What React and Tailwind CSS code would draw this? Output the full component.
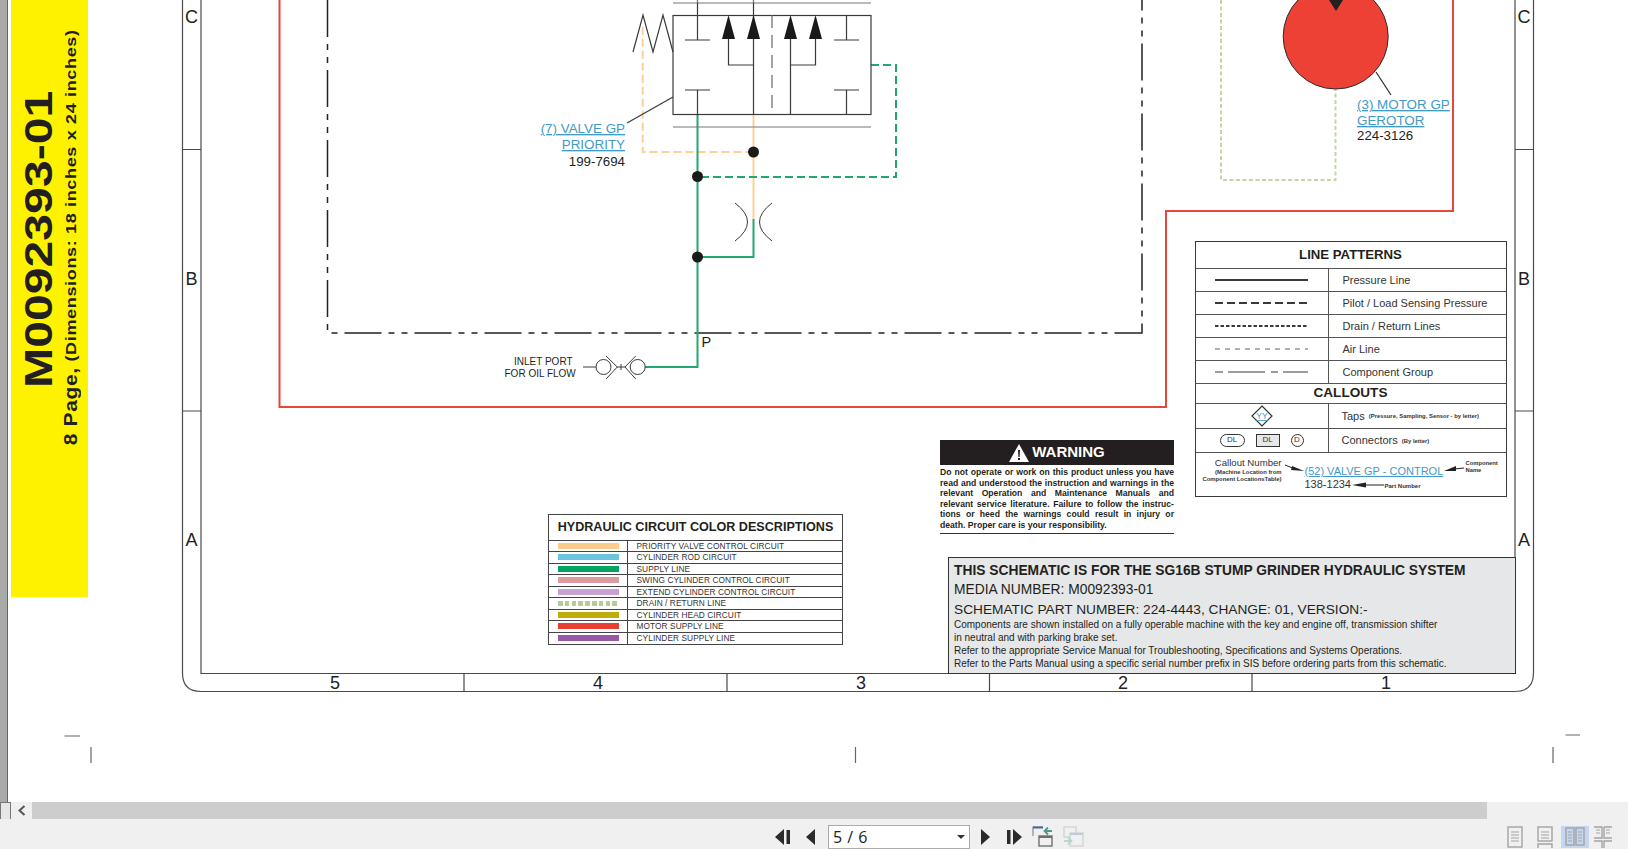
import React from "react";

const INK = "#3a3a3a";
const LINK = "text-[#3f9ac6] underline";

const linePatterns = [
  { label: "Pressure Line", sw: 2, dash: "" },
  { label: "Pilot / Load Sensing Pressure", sw: 2, dash: "8 4" },
  { label: "Drain / Return Lines", sw: 2, dash: "3.5 2" },
  { label: "Air Line", sw: 0.8, dash: "5 5" },
  { label: "Component Group", sw: 1.2, dash: "8 5 37 6 7 5 25" },
];

const circuits = [
  { label: "PRIORITY VALVE CONTROL CIRCUIT", color: "bg-[#fecb8b]" },
  { label: "CYLINDER ROD CIRCUIT", color: "bg-[#6cc5de]" },
  { label: "SUPPLY LINE", color: "bg-[#00a65e]" },
  { label: "SWING CYLINDER CONTROL CIRCUIT", color: "bg-[#dd9a9f]" },
  { label: "EXTEND CYLINDER CONTROL CIRCUIT", color: "bg-[#c7a1cf]" },
  { label: "DRAIN / RETURN LINE", dashed: true },
  { label: "CYLINDER HEAD CIRCUIT", color: "bg-[#bfab0a]" },
  { label: "MOTOR SUPPLY LINE", color: "bg-[#e93f33]" },
  { label: "CYLINDER SUPPLY LINE", color: "bg-[#9a59a6]" },
];

const warningLines = [
  "Do not operate or work on this product unless you have",
  "read and understood the instruction and warnings in the",
  "relevant Operation and Maintenance Manuals and",
  "relevant service literature. Failure to follow the instruc-",
  "tions or heed the warnings could result in injury or",
];

// everything that is plain line work on the sheet
function Schematic() {
  return (
    <svg className="absolute inset-0" width="1620" height="802" viewBox="8 0 1620 802" fill="none">
      {/* sheet frame */}
      <g stroke="#4a4a4a" strokeWidth="1.2">
        <path d="M182.5 0V673Q182.5 691.5 201 691.5H1515Q1533.5 691.5 1533.5 673V0" />
        <path d="M201 0V673.5H1515V0" />
        <path d="M182.5 149.5H201M182.5 411H201M1515 149.5H1533.5M1515 411H1533.5" />
        <path d="M464 673.5V691.5M727 673.5V691.5M989.5 673.5V691.5M1252 673.5V691.5" />
      </g>
      <g fontSize="18" fill="#231f20" textAnchor="middle">
        <text x="191.5" y="23">C</text>
        <text x="191.5" y="285">B</text>
        <text x="191.5" y="546">A</text>
        <text x="1524" y="23">C</text>
        <text x="1524" y="285">B</text>
        <text x="1524" y="546">A</text>
        <text x="335" y="689">5</text>
        <text x="598" y="689">4</text>
        <text x="861" y="689">3</text>
        <text x="1123" y="689">2</text>
        <text x="1386" y="689">1</text>
      </g>

      {/* crop marks */}
      <path d="M64.5 736H80M91 747V763M855.5 747V763M1553 747V763M1565.5 735H1580" stroke="#666" strokeWidth="1.2" />

      {/* component group boundary */}
      <path d="M327.5 0V333H1142V0" stroke="#222" strokeWidth="1.5" strokeDasharray="37 7 6 7 6 7" />

      {/* motor supply */}
      <path d="M279.5 0V407H1166V211H1453V0" stroke="#e8453b" strokeWidth="2" />

      {/* pilot and supply lines */}
      <path d="M753.5 114V219" stroke="#fcd096" strokeWidth="2" />
      <path d="M753.5 152H642.7V25" stroke="#fcd096" strokeWidth="2" strokeDasharray="8 4" />
      <path d="M871 65H896V177H697.5" stroke="#22a86e" strokeWidth="2" strokeDasharray="8 4" />
      <path d="M645 367H697.5V114M697.5 257H753.5V219" stroke="#22a86e" strokeWidth="2" />
      <path d="M1221 0V180H1335.5V89" stroke="#c3d5a8" strokeWidth="2" strokeDasharray="4 2.5" />

      {/* priority valve */}
      <g stroke="#3a3a3a" strokeWidth="1.2">
        <path d="M673 3H871M673 127H871" stroke="#777" />
        <rect x="673" y="15.5" width="198" height="99" />
        <path d="M633 52L643 15L653 52L663 15L673 52" />
        <path d="M697.5 0V40M685 40H710M685 90H710M697.5 90V114" />
        <path d="M846.5 15V40M834 40H859M834 90H859M846.5 90V114" />
        <path d="M728.5 35V65H753.5M753.5 0V114M790.5 35V114M790.5 65H815.5V35" />
        <path d="M772 15V114" stroke="#666" strokeDasharray="13 7" />
        <path d="M627 123L673 97" />
      </g>
      <path d="M697.5 0V3" stroke="#e8453b" />
      <path d="M753.5 0V3" stroke="#9a59a6" />
      <g fill="#1a1a1a">
        <path d="M728.5 15L735 39H722Z" />
        <path d="M753.5 15L760 39H747Z" />
        <path d="M790.5 15L797 39H784Z" />
        <path d="M815.5 15L822 39H809Z" />
        <circle cx="753.5" cy="152" r="5.5" />
        <circle cx="697.5" cy="176.5" r="5.5" />
        <circle cx="697.5" cy="257" r="5.5" />
      </g>

      {/* orifice */}
      <path d="M735 203Q760 222 735 241M772 203Q747 222 772 241" stroke="#3a3a3a" strokeWidth="1" />

      {/* inlet coupling */}
      <g stroke="#3a3a3a" strokeWidth="1">
        <path d="M583 367H596" />
        <circle cx="603.5" cy="367" r="7.5" />
        <path d="M606 356L617.3 367L606 379" />
        <path d="M617 367H625M621 364V370" />
        <path d="M635.7 356L625 367L635.7 379" />
        <circle cx="637.7" cy="367" r="7.5" />
      </g>

      {/* gerotor motor */}
      <circle cx="1335.7" cy="36.5" r="52.5" fill="#ee4136" stroke="#2b2b2b" strokeWidth="1" />
      <path d="M1329 0L1336 11L1343 0Z" fill="#231f20" />
      <path d="M1376 72L1391 95" stroke="#2b2b2b" strokeWidth="1.2" />

      {/* labels on the drawing */}
      <g fontSize="13.4" fill="#3f9ac6">
        <text x="625" y="133" textAnchor="end" textDecoration="underline">(7) VALVE GP</text>
        <text x="625" y="149" textAnchor="end" textDecoration="underline">PRIORITY</text>
        <text x="1357" y="109" textDecoration="underline">(3) MOTOR GP</text>
        <text x="1357" y="125" textDecoration="underline">GEROTOR</text>
      </g>
      <g fontSize="13.3" fill="#231f20">
        <text x="625" y="166" textAnchor="end">199-7694</text>
        <text x="1357" y="140">224-3126</text>
        <text x="701.5" y="347" fontSize="14.5">P</text>
      </g>
      <g fontSize="10" fill="#231f20">
        <text x="514" y="365">INLET PORT</text>
        <text x="504.5" y="377">FOR OIL FLOW</text>
      </g>
    </svg>
  );
}

function MediaBanner() {
  return (
    <div className="absolute left-[3px] top-0 w-[77px] h-[597px] bg-[#fff200] text-[#231f20] font-bold">
      <div className="absolute left-[9px] top-[93px] h-[293px] w-[38px] flex items-center justify-center">
        <span className="[writing-mode:vertical-rl] [transform:rotate(180deg)_scaleY(1.235)] text-[39px] leading-[38px] whitespace-nowrap">
          M0092393-01
        </span>
      </div>
      <div className="absolute left-[50px] top-[29px] h-[417px] w-[20px] flex items-center justify-center">
        <span className="[writing-mode:vertical-rl] [transform:rotate(180deg)_scaleY(1.2)] text-[15px] leading-[20px] tracking-[0.55px] whitespace-nowrap">
          <span className="text-[17.5px]">8 Page,</span> (Dimensions: 18 inches x 24 inches)
        </span>
      </div>
    </div>
  );
}

function ColorTable() {
  return (
    <div className="absolute left-[540px] top-[514px] w-[295px] border-[1.5px] border-[#444] bg-white text-[#333]">
      <div className="h-[25.5px] flex items-center justify-center border-b-[1.5px] border-[#444] text-[12.6px] font-bold text-[#231f20] whitespace-nowrap">
        HYDRAULIC CIRCUIT COLOR DESCRIPTIONS
      </div>
      {circuits.map((c, i) => (
        <div key={c.label} className={`flex h-[11.5px] ${i < circuits.length - 1 ? "border-b border-[#444]" : ""}`}>
          <div className="w-[79px] pl-[9px] flex items-center border-r border-[#444]">
            {c.dashed ? (
              <div className="w-[61px] h-[5px] bg-[repeating-linear-gradient(90deg,#b5cc99_0_4.5px,transparent_4.5px_6.8px)]" />
            ) : (
              <div className={`w-[61px] h-[6px] ${c.color}`} />
            )}
          </div>
          <div className="pl-[8.5px] text-[8.3px] leading-[10.6px] tracking-[0.08px] whitespace-nowrap">{c.label}</div>
        </div>
      ))}
    </div>
  );
}

function WarningBox() {
  return (
    <div className="absolute left-[932px] top-[440px] w-[234px]">
      <div className="h-[25px] bg-[#231f20] text-white flex items-center justify-center gap-[3px] text-[15px] font-bold">
        <svg width="20" height="18" viewBox="0 0 20 18">
          <path d="M10 0L20 18H0Z" fill="#fff" />
          <path d="M9 6H11L10.6 13H9.4ZM9 14H11V16H9Z" fill="#231f20" />
        </svg>
        WARNING
      </div>
      <div className="pt-[2px] pb-[3px] border-b-[1.5px] border-[#333] text-[8.65px] leading-[10.5px] font-bold text-[#231f20]">
        {warningLines.map((line) => (
          <div key={line} className="[text-align-last:justify]">{line}</div>
        ))}
        <div>death. Proper care is your responsibility.</div>
      </div>
    </div>
  );
}

function Callouts() {
  return (
    <div className="relative h-[43px] text-[#333]">
      <div className="absolute right-[224px] top-[4px] text-[9.6px] leading-[12px] whitespace-nowrap">Callout Number</div>
      <div className="absolute right-[224px] top-[16px] text-[5.9px] leading-[7px] font-bold text-right whitespace-nowrap">
        (Machine Location from
        <br />
        Component LocationsTable)
      </div>
      <div className={`absolute left-[109px] top-[11px] text-[11px] leading-[14px] whitespace-nowrap ${LINK}`}>(52) VALVE GP - CONTROL</div>
      <div className="absolute left-[109px] top-[24px] text-[11px] leading-[14px] whitespace-nowrap">138-1234</div>
      <div className="absolute left-[270px] top-[7px] text-[5.8px] leading-[7px] font-bold whitespace-nowrap">
        Component
        <br />
        Name
      </div>
      <div className="absolute left-[189px] top-[29px] text-[6px] leading-[8px] font-bold whitespace-nowrap">Part Number</div>
      <svg className="absolute inset-0" width="310" height="43" viewBox="0 0 310 43" fill="none">
        <path d="M89 12L99 16" stroke="#222" />
        <path d="M108 18L96 13L95 17Z" fill="#222" />
        <path d="M268 15L258 16" stroke="#222" />
        <path d="M248 18L260 13V18Z" fill="#222" />
        <path d="M188 32H170" stroke="#222" />
        <path d="M156 32L170 29.5V34.5Z" fill="#222" />
      </svg>
    </div>
  );
}

function LinePatterns() {
  return (
    <div className="absolute left-[1186.5px] top-[241px] w-[312px] border-[1.2px] border-[#3a3a3a] bg-white text-[#333]">
      <div className="h-[27px] flex items-center justify-center text-[13.2px] font-bold text-[#231f20] border-b-[1.5px] border-[#555]">
        LINE PATTERNS
      </div>
      {linePatterns.map((p) => (
        <div key={p.label} className="flex h-[23px] border-b-[1.2px] border-[#555]">
          <div className="w-[133px] flex items-center justify-center border-r-[1.2px] border-[#555]">
            <svg width="93" height="4" viewBox="0 0 93 4">
              <path d="M0 2H93" stroke={INK} strokeWidth={p.sw} strokeDasharray={p.dash} />
            </svg>
          </div>
          <div className="pl-[14px] flex items-center text-[11px] whitespace-nowrap">{p.label}</div>
        </div>
      ))}
      <div className="h-[20px] flex items-center justify-center text-[13.6px] font-bold text-[#231f20] border-b-[1.5px] border-[#555]">
        CALLOUTS
      </div>
      <div className="flex h-[24.5px] border-b-[1.2px] border-[#555]">
        <div className="w-[133px] flex items-center justify-center border-r-[1.2px] border-[#555]">
          <svg width="22" height="22" viewBox="0 0 22 22">
            <path d="M11 1L21 11L11 21L1 11Z" fill="#fff" stroke="#333" strokeWidth="1.2" />
            <text x="11" y="14" fontSize="8.5" textAnchor="middle" fill="#3f9ac6" textDecoration="underline">YY</text>
          </svg>
        </div>
        <div className="pl-[13px] flex items-center gap-[4px] text-[11px] whitespace-nowrap">
          Taps <span className="text-[5.9px] font-bold pt-[2px]">(Pressure, Sampling, Sensor - by letter)</span>
        </div>
      </div>
      <div className="flex h-[24.5px] border-b-[1.2px] border-[#555]">
        <div className="w-[133px] flex items-center justify-center gap-[11px] border-r-[1.2px] border-[#555] text-[8px]">
          <span className="w-[25px] h-[13px] rounded-full border border-[#333] flex items-center justify-center">DL</span>
          <span className="w-[24px] h-[13px] border border-[#333] bg-[#e6e7e8] flex items-center justify-center">DL</span>
          <span className="w-[13px] h-[13px] rounded-full border border-[#333] flex items-center justify-center">D</span>
        </div>
        <div className="pl-[13px] flex items-center gap-[4px] text-[11px] whitespace-nowrap">
          Connectors <span className="text-[5.9px] font-bold pt-[2px]">(By letter)</span>
        </div>
      </div>
      <Callouts />
    </div>
  );
}

function InfoBox() {
  return (
    <div className="absolute left-[940px] top-[556.5px] w-[568px] h-[117px] bg-[#e6e7e8] border-[1.5px] border-[#333] pl-[5px] text-[#231f20] whitespace-nowrap">
      <div className="pt-[5px] text-[13.8px] leading-[16px] font-bold">THIS SCHEMATIC IS FOR THE SG16B STUMP GRINDER HYDRAULIC SYSTEM</div>
      <div className="pt-[3px] text-[13.8px] leading-[16px]">MEDIA NUMBER: M0092393-01</div>
      <div className="pt-[4.5px] text-[13.7px] leading-[16px]">SCHEMATIC PART NUMBER: 224-4443, CHANGE: 01, VERSION:-</div>
      <div className="text-[10px] leading-[13px]">
        <div>Components are shown installed on a fully operable machine with the key and engine off, transmission shifter</div>
        <div>in neutral and with parking brake set.</div>
        <div>Refer to the appropriate Service Manual for Troubleshooting, Specifications and Systems Operations.</div>
        <div>Refer to the Parts Manual using a specific serial number prefix in SIS before ordering parts from this schematic.</div>
      </div>
    </div>
  );
}

function NavFirst() {
  return (
    <svg width="16" height="16" viewBox="0 0 16 16">
      <path d="M9 0V16L0 8Z" fill="#2b2b2b" />
      <rect x="11.5" y="1" width="3.5" height="14" fill="#2b2b2b" />
    </svg>
  );
}

function PageIcon({ rows = 1, two = false, cut = false }) {
  return (
    <svg width="20" height="22" viewBox="0 0 20 22" fill="none" stroke="#a3a3a3" strokeWidth="1.4">
      {two ? (
        <>
          <rect x="1" y="2" width="8" height="17" />
          <rect x="11" y="2" width="8" height="17" />
          <path d="M3 6H7M3 9H7M3 12H7M3 15H7M13 6H17M13 9H17M13 12H17M13 15H17" strokeWidth="1" />
        </>
      ) : cut ? (
        <>
          <path d="M1 1H9V12H1M11 1H19M11 1V12H19M1 15H9V22M11 22V15H19" />
          <path d="M3 4H7M3 7H7M13 4H17M13 7H17" strokeWidth="1" />
        </>
      ) : (
        <>
          <rect x="3" y="1" width="14" height={rows > 1 ? 14 : 20} />
          {rows > 1 && <path d="M3 22V18H17V22" />}
          <path d="M6 6H14M6 9H14M6 12H14" strokeWidth="1" />
          {rows === 1 && <path d="M6 15H14" strokeWidth="1" />}
        </>
      )}
    </svg>
  );
}

function Toolbar() {
  return (
    <div className="h-[30px] bg-[#f0f0f0] flex items-center pt-[5px] pl-[775px] pr-[15px]">
      <NavFirst />
      <svg className="ml-[15px]" width="10" height="16" viewBox="0 0 10 16">
        <path d="M9 0V16L0 8Z" fill="#2b2b2b" />
      </svg>
      <div className="ml-[12px] w-[142px] h-[24px] bg-white border border-[#ababab] flex items-center justify-between pl-[4px] pr-[4px] font-['Open_Sans'] text-[16px] text-[#222]">
        <span className="tracking-[0.5px]">5 / 6</span>
        <svg width="8" height="4" viewBox="0 0 8 4">
          <path d="M0 0H8L4 4Z" fill="#333" />
        </svg>
      </div>
      <svg className="ml-[10px]" width="10" height="16" viewBox="0 0 10 16">
        <path d="M1 0V16L10 8Z" fill="#2b2b2b" />
      </svg>
      <svg className="ml-[16px] rotate-180" width="16" height="16" viewBox="0 0 16 16">
        <path d="M9 0V16L0 8Z" fill="#2b2b2b" />
        <rect x="11.5" y="1" width="3.5" height="14" fill="#2b2b2b" />
      </svg>
      <svg className="ml-[10px]" width="21" height="21" viewBox="0 0 21 21" fill="none">
        <path d="M1 10V1H11" stroke="#8a8a8a" strokeWidth="1.2" />
        <path d="M1 1.5H11" stroke="#3a6ea5" strokeWidth="2" />
        <rect x="7" y="10" width="13" height="10" stroke="#6f6f6f" strokeWidth="1.4" />
        <path d="M7 11H20" stroke="#6f6f6f" strokeWidth="2" />
        <path d="M20 5H13M16 1.5L12.5 5L16 8.5" stroke="#4e9a8a" strokeWidth="1.8" />
      </svg>
      <svg className="ml-[10px]" width="21" height="21" viewBox="0 0 21 21" fill="none" opacity="0.55">
        <rect x="1" y="1" width="12" height="10" stroke="#b5b5b5" strokeWidth="1.2" />
        <rect x="7" y="7" width="13" height="13" fill="#f0f0f0" stroke="#b5b5b5" strokeWidth="1.2" />
        <path d="M7 8H20" stroke="#8fb0d8" strokeWidth="2" />
        <path d="M1 15H8M5 11.5L8.5 15L5 18.5" stroke="#8ec0b0" strokeWidth="1.8" />
      </svg>
      <div className="ml-auto flex items-center">
        <PageIcon />
        <div className="ml-[10px]">
          <PageIcon rows={2} />
        </div>
        <div className="ml-[6px] w-[28px] h-[22px] bg-[#c4d7ee] flex items-center justify-center">
          <PageIcon two />
        </div>
        <div className="ml-[4px]">
          <PageIcon cut />
        </div>
      </div>
    </div>
  );
}

export default function App() {
  return (
    <div className="w-[1628px] h-[849px] overflow-hidden flex flex-col bg-white font-['Liberation_Sans',Arial,sans-serif]">
      <div className="flex h-[802px]">
        <div className="w-[8px] bg-[#a9a9a9] border-r border-[#666]" />
        <div className="relative flex-1 overflow-hidden">
          <MediaBanner />
          <Schematic />
          <ColorTable />
          <WarningBox />
          <LinePatterns />
          <InfoBox />
        </div>
      </div>

      {/* horizontal scrollbar */}
      <div className="flex h-[17px] bg-[#f0f0f0]">
        <div className="w-[11px] bg-[#e6e6e6] border-x border-t border-[#777]" />
        <div className="w-[21px] flex items-center justify-center">
          <svg width="8" height="11" viewBox="0 0 8 11" fill="none">
            <path d="M6.5 1L1.5 5.5L6.5 10" stroke="#555" strokeWidth="2" />
          </svg>
        </div>
        <div className="w-[1455px] bg-[#cdcdcd]" />
      </div>
      <Toolbar />
    </div>
  );
}
